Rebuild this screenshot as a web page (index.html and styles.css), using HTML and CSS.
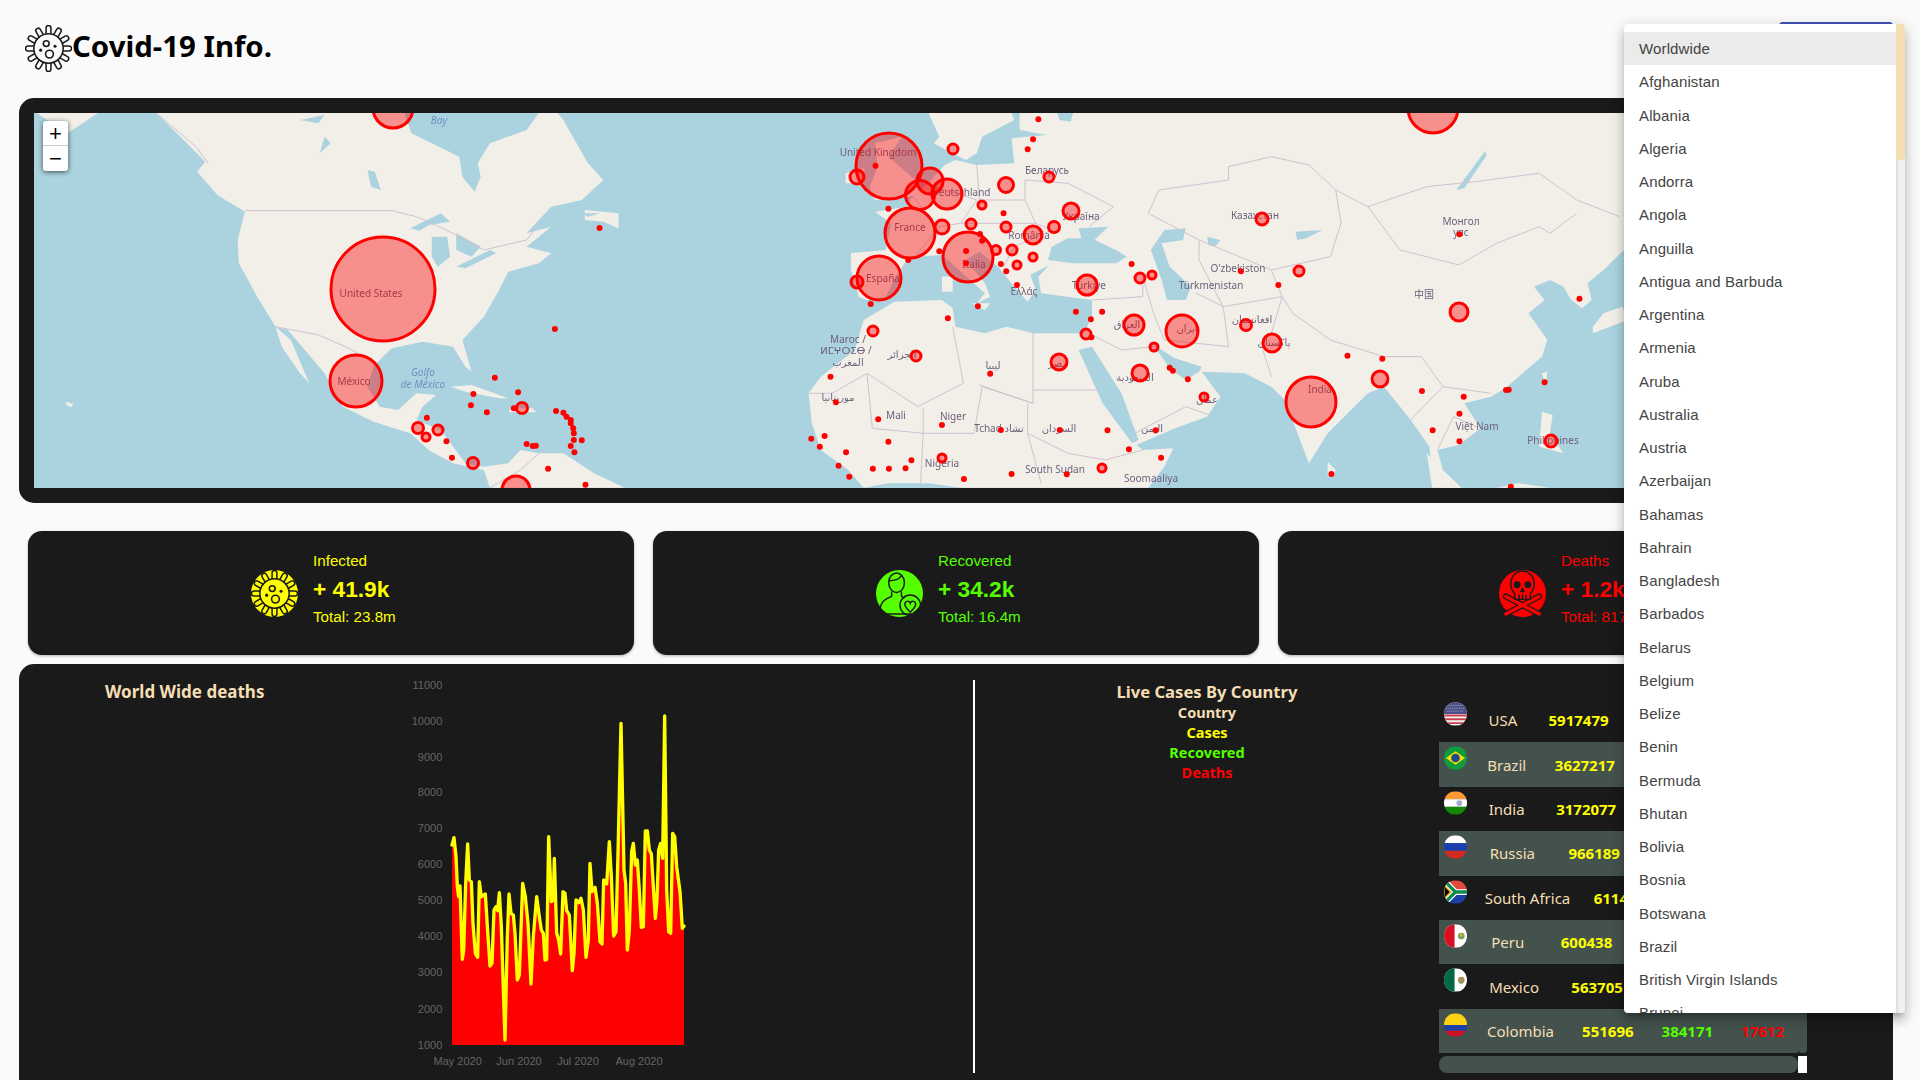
FILE: index.html
```html
<!DOCTYPE html>
<html lang="en">
<head>
    <meta charset="UTF-8">
    <meta name="viewport" content="width=device-width, initial-scale=1.0">
    <title>Covid-19 Info.</title>
    <link rel="stylesheet" href="styles.css">
</head>
<body>

    <svg class="defs" width="0" height="0">
        <defs>
            <g id="spikes">
                <path d="M14 0H21"/>
                <path transform="rotate(30)" d="M14 0H21"/>
                <path transform="rotate(60)" d="M14 0H21"/>
                <path transform="rotate(90)" d="M14 0H21"/>
                <path transform="rotate(120)" d="M14 0H21"/>
                <path transform="rotate(150)" d="M14 0H21"/>
                <path transform="rotate(180)" d="M14 0H21"/>
                <path transform="rotate(210)" d="M14 0H21"/>
                <path transform="rotate(240)" d="M14 0H21"/>
                <path transform="rotate(270)" d="M14 0H21"/>
                <path transform="rotate(300)" d="M14 0H21"/>
                <path transform="rotate(330)" d="M14 0H21"/>
            </g>
            <g id="virus" transform="translate(24 24)">
                <use href="#spikes" class="virus-outer"/>
                <use href="#spikes" class="virus-inner"/>
                <circle class="virus-body" r="15"/>
                <circle class="virus-ring" cx="-2.3" cy="-5" r="3"/>
                <circle class="virus-ring" cx="1" cy="5.7" r="4"/>
                <circle class="virus-dot" cx="6.7" cy="-2.3" r="1.6"/>
                <circle class="virus-dot" cx="-8" cy="1.7" r="1.6"/>
            </g>
        </defs>
    </svg>

    <header class="topbar">
        <div class="brand">
            <svg class="logo" viewBox="0 0 48 48"><use href="#virus"/></svg>
            <h1 class="brand-name">Covid-19 Info.</h1>
        </div>
        <button class="country-button">Worldwide</button>
    </header>

    <section class="map-panel">
        <div class="map">
            <svg class="map-svg" viewBox="34 113 1844 375" width="1844" height="375">
                <g class="tiles">
                    <!-- americas, traced in the left half -->
                    <g transform="translate(0 100) scale(.6124 .3333)">
                        <path class="land" d="M255 39L300 120L335 185L322 215L355 285L400 335L388 420L390 490L420 590L450 680L470 690L530 820L560 920L610 965L670 1000L700 1050L740 1090L790 1110L800 1163L1020 1163L970 1120L920 1060L880 1060L850 1050L830 1090L790 1100L760 1090L740 1040L720 990L680 960L690 920L712 885L680 880L650 930L620 920L600 860L610 800L625 770L640 745L690 725L740 740L760 800L770 815L755 720L790 650L815 570L830 515L880 490L900 460L860 440L900 380L860 400L900 320L950 300L985 240L960 190L920 60L910 39L880 39L860 90L800 130L780 190L785 230L775 275L755 230L750 170L672 100L660 39Z"/>
                        <path class="land" d="M450 680L475 720L505 850L490 820L460 740Z"/>
                        <path class="land" d="M955 330L1010 340L1010 385L985 365L955 360Z"/>
                        <path class="land" d="M60 39L160 39L135 70L110 100L85 70Z"/>
                        <path class="land" d="M735 860L770 855L830 895L815 895L760 875Z"/>
                        <path class="land" d="M835 925L870 925L875 937L830 937Z"/>
                        <path class="land" d="M108 905L120 912L116 922L108 915Z"/>
                        <path class="land" d="M1520 39H1568V70L1540 90Z"/>
                        <path class="water" d="M670 385L720 340L735 365L700 375L685 392Z"/>
                        <path class="water" d="M705 410L730 410L735 470L715 500L705 470Z"/>
                        <path class="water" d="M745 400L785 440L770 470L745 450Z"/>
                        <path class="water" d="M745 500L800 450L810 460L760 505Z"/>
                        <path class="water" d="M600 210L612 215L622 270L606 260Z"/>
                        <path class="water" d="M490 60L530 45L520 70Z"/>
                        <path class="water" d="M530 110L540 130L522 160Z"/>
                        <path class="water" d="M950 340H980L960 350Z"/>
                        <path class="border" d="M400 332H640L680 350L740 400L790 450L860 420L880 370"/>
                        <path class="border" d="M450 680L520 705L570 745L620 800"/>
                        <path class="border" d="M255 39L320 140L340 190"/>
                        <path class="border" d="M800 1163L850 1110L880 1060"/>
                    </g>
                    <!-- europe, africa and asia, traced in the right half -->
                    <g transform="translate(800 100) scale(.5357 .3333)">
                        <path class="land" d="M125 600L160 590L175 540L195 490L215 470L265 465L290 500L345 580L330 610L355 590L345 550L310 480L335 455L370 500L400 560L425 605L440 570L430 525L465 495L445 530L450 580L545 600L545 650L530 700L510 700L435 700L385 680L345 700L290 680L285 625L265 600L176 605L119 660L102 750L39 830L16 880L22 970L39 1050L90 1110L119 1163L165 1150L240 1150L300 1163L650 1163L680 1100L697 1045L640 1050L628 1035L700 985L760 950L785 890L750 815L830 820L880 860L905 900L950 1090L985 1000L1060 880L1090 860L1115 910L1140 960L1175 1040L1180 1120L1200 1163L1235 1163L1200 1110L1190 1050L1230 1035L1270 985L1240 910L1290 890L1320 860L1385 770L1395 720L1360 640L1390 600L1370 560L1400 540L1425 560L1440 600L1460 625L1478 600L1470 550L1500 510L1538 450L1600 400L1600 39L470 39L410 39L410 90L460 105L395 115L400 190L330 195L290 180L270 195L245 240L205 300L200 320L140 335L170 370L160 450L95 460L95 510L110 590Z"/>
                        <path class="land" d="M240 39L260 110L250 130L290 165L310 180L330 160L340 110L400 60L395 39Z"/>
                        <path class="land" d="M140 130L190 110L165 170L215 240L230 285L140 300L130 260L145 200Z"/>
                        <path class="land" d="M85 220L120 205L120 250L85 250Z"/>
                        <path class="land" d="M320 610L355 610L345 630Z"/>
                        <path class="land" d="M265 530L285 530L285 575L265 575Z"/>
                        <path class="land" d="M1480 680L1500 640L1535 620L1545 660L1480 700Z"/>
                        <path class="land" d="M1385 820L1395 815L1392 860Z"/>
                        <path class="land" d="M1385 935L1405 945L1400 1000L1425 1060L1380 1040Z"/>
                        <path class="land" d="M985 1085L1000 1110L995 1130L985 1125Z"/>
                        <path class="land" d="M1170 1060L1230 1163H1180Z"/>
                        <path class="land" d="M1300 1163L1340 1150L1400 1163Z"/>
                        <path class="water" d="M463 480L470 440L500 415L525 415L520 385L575 380L550 420L590 450L610 470L590 490L510 490Z"/>
                        <path class="water" d="M680 390L720 385L715 420L675 430L690 500L730 560L720 600L685 600L675 540L655 450Z"/>
                        <path class="water" d="M520 750L545 740L600 880L632 1020L620 1030L565 910Z"/>
                        <path class="water" d="M660 735L700 775L750 800L745 815L720 840L690 805Z"/>
                        <path class="water" d="M480 39L510 39L505 65L485 60Z"/>
                        <path class="water" d="M925 395L975 390L945 415L928 420Z"/>
                        <path class="water" d="M1225 270L1278 155L1282 165L1240 265Z"/>
                        <path class="water" d="M760 410L785 420L775 440L762 435Z"/>
                        <path class="border" d="M125 820L135 985L230 1000L325 1000L340 860L435 910V690"/>
                        <path class="border" d="M125 820L220 920L305 850L285 680"/>
                        <path class="border" d="M335 855L435 910"/>
                        <path class="border" d="M435 870H555"/>
                        <path class="border" d="M230 925V1000L225 1150"/>
                        <path class="border" d="M425 1000L500 1060L570 1080L640 1050"/>
                        <path class="border" d="M425 910V1000L450 1150"/>
                        <path class="border" d="M16 880H60L125 820"/>
                        <path class="border" d="M650 340L670 270L800 240L800 200L880 170L950 195L1000 270L1060 320"/>
                        <path class="border" d="M1060 320L1170 260L1260 245L1380 220L1450 300L1530 350"/>
                        <path class="border" d="M1060 320L1120 450L1230 495L1300 430L1380 380L1400 400L1450 340"/>
                        <path class="border" d="M900 590L920 640L990 720L1090 770L1160 770L1200 860L1290 880"/>
                        <path class="border" d="M640 530L660 640L680 720L800 740L790 620L740 580"/>
                        <path class="border" d="M790 620L900 590L880 700L860 730L880 830"/>
                        <path class="border" d="M745 420L880 510L990 470L1010 370L1000 270"/>
                        <path class="border" d="M650 340L745 420V480L790 620"/>
                        <path class="border" d="M900 590L880 510"/>
                        <path class="border" d="M330 195L335 300L420 300L420 240L500 250L585 320L540 380"/>
                        <path class="border" d="M250 260L330 300L300 370L260 380"/>
                        <path class="border" d="M210 290L260 380L215 470"/>
                        <path class="border" d="M420 300L440 370L470 390L400 440L380 500"/>
                        <path class="border" d="M300 370L400 370L440 370"/>
                        <path class="border" d="M540 700L600 750L660 740"/>
                        <path class="border" d="M625 1000L720 920L765 945"/>
                        <path class="border" d="M545 600L640 590L640 530"/>
                        <path class="border" d="M1140 960L1200 860"/>
                        <path class="border" d="M1190 1050L1220 950L1270 985"/>
                    </g>
                    <text class="map-label" x="371" y="297" text-anchor="middle">United States</text>
                    <text class="map-label" x="354" y="385" text-anchor="middle">México</text>
                    <text class="map-label water-label" x="423" y="376" text-anchor="middle">Golfo</text>
                    <text class="map-label water-label" x="423" y="388" text-anchor="middle">de México</text>
                    <text class="map-label water-label" x="439" y="124" text-anchor="middle">Bay</text>
                    <text class="map-label" x="878" y="156" text-anchor="middle">United Kingdom</text>
                    <text class="map-label" x="961" y="196" text-anchor="middle">Deutschland</text>
                    <text class="map-label" x="1047" y="174" text-anchor="middle">Беларусь</text>
                    <text class="map-label" x="1081" y="220" text-anchor="middle">Україна</text>
                    <text class="map-label" x="1029" y="239" text-anchor="middle">România</text>
                    <text class="map-label" x="910" y="231" text-anchor="middle">France</text>
                    <text class="map-label" x="974" y="268" text-anchor="middle">Italia</text>
                    <text class="map-label" x="883" y="282" text-anchor="middle">España</text>
                    <text class="map-label" x="1024" y="295" text-anchor="middle">Ελλάς</text>
                    <text class="map-label" x="1089" y="289" text-anchor="middle">Türkiye</text>
                    <text class="map-label" x="1255" y="219" text-anchor="middle">Казахстан</text>
                    <text class="map-label" x="1461" y="225" text-anchor="middle">Монгол</text>
                    <text class="map-label" x="1461" y="236" text-anchor="middle">улс</text>
                    <text class="map-label" x="1238" y="272" text-anchor="middle">O'zbekiston</text>
                    <text class="map-label" x="1211" y="289" text-anchor="middle">Türkmenistan</text>
                    <text class="map-label" x="1424" y="298" text-anchor="middle">中国</text>
                    <text class="map-label" x="1252" y="323" text-anchor="middle">افغانستان</text>
                    <text class="map-label" x="1274" y="346" text-anchor="middle">پاکستان</text>
                    <text class="map-label" x="1127" y="328" text-anchor="middle">العراق</text>
                    <text class="map-label" x="1187" y="332" text-anchor="middle">ایران</text>
                    <text class="map-label" x="993" y="369" text-anchor="middle">ليبيا</text>
                    <text class="map-label" x="1058" y="367" text-anchor="middle">مصر</text>
                    <text class="map-label" x="902" y="358" text-anchor="middle">الجزائر</text>
                    <text class="map-label" x="848" y="343" text-anchor="middle">Maroc /</text>
                    <text class="map-label" x="846" y="354" text-anchor="middle">ⵍⵎⵖⵔⵉⴱ /</text>
                    <text class="map-label" x="848" y="366" text-anchor="middle">المغرب</text>
                    <text class="map-label" x="838" y="401" text-anchor="middle">موريتانيا</text>
                    <text class="map-label" x="896" y="419" text-anchor="middle">Mali</text>
                    <text class="map-label" x="953" y="420" text-anchor="middle">Niger</text>
                    <text class="map-label" x="999" y="432" text-anchor="middle">Tchad تشاد</text>
                    <text class="map-label" x="1059" y="432" text-anchor="middle">السودان</text>
                    <text class="map-label" x="1152" y="432" text-anchor="middle">اليمن</text>
                    <text class="map-label" x="942" y="467" text-anchor="middle">Nigeria</text>
                    <text class="map-label" x="1055" y="473" text-anchor="middle">South Sudan</text>
                    <text class="map-label" x="1151" y="482" text-anchor="middle">Soomaaliya</text>
                    <text class="map-label" x="1320" y="393" text-anchor="middle">India</text>
                    <text class="map-label" x="1135" y="381" text-anchor="middle">السعودية</text>
                    <text class="map-label" x="1207" y="403" text-anchor="middle">عمان</text>
                    <text class="map-label" x="1477" y="430" text-anchor="middle">Việt Nam</text>
                    <text class="map-label" x="1553" y="444" text-anchor="middle">Philippines</text>
                </g>
                <g class="markers">
                    <circle cx="383" cy="289" r="52"/>
                    <circle cx="356" cy="381" r="26"/>
                    <circle cx="393" cy="108" r="20"/>
                    <circle cx="516" cy="490" r="14"/>
                    <circle cx="522" cy="408" r="5.5"/>
                    <circle cx="418" cy="428" r="5.5"/>
                    <circle cx="438" cy="430" r="5"/>
                    <circle cx="426" cy="437" r="4"/>
                    <circle cx="473" cy="463" r="5.5"/>
                    <circle cx="889" cy="166" r="33"/>
                    <circle cx="857" cy="177" r="7"/>
                    <circle cx="930" cy="181" r="13"/>
                    <circle cx="920" cy="195" r="14.5"/>
                    <circle cx="947" cy="194" r="15"/>
                    <circle cx="953" cy="149" r="5"/>
                    <circle cx="910" cy="233" r="25"/>
                    <circle cx="879" cy="278" r="22"/>
                    <circle cx="857" cy="282" r="6"/>
                    <circle cx="968" cy="257" r="25"/>
                    <circle cx="942" cy="227" r="7"/>
                    <circle cx="1006" cy="185" r="7.5"/>
                    <circle cx="1049" cy="177" r="5"/>
                    <circle cx="1071" cy="211" r="8"/>
                    <circle cx="982" cy="205" r="4"/>
                    <circle cx="971" cy="224" r="5"/>
                    <circle cx="1006" cy="227" r="5"/>
                    <circle cx="1033" cy="235" r="9"/>
                    <circle cx="1054" cy="227" r="5.5"/>
                    <circle cx="1012" cy="250" r="5"/>
                    <circle cx="996" cy="250" r="4.5"/>
                    <circle cx="1033" cy="257" r="4"/>
                    <circle cx="1017" cy="265" r="4"/>
                    <circle cx="1087" cy="285" r="10"/>
                    <circle cx="1182" cy="331" r="16"/>
                    <circle cx="1134" cy="325" r="10"/>
                    <circle cx="1086" cy="334" r="5"/>
                    <circle cx="1059" cy="362" r="8"/>
                    <circle cx="1140" cy="373" r="8"/>
                    <circle cx="1154" cy="347" r="4"/>
                    <circle cx="1272" cy="343" r="9"/>
                    <circle cx="1246" cy="325" r="5.5"/>
                    <circle cx="1311" cy="402" r="25"/>
                    <circle cx="1380" cy="379" r="8"/>
                    <circle cx="1459" cy="312" r="9"/>
                    <circle cx="1262" cy="219" r="6"/>
                    <circle cx="1299" cy="271" r="5"/>
                    <circle cx="1140" cy="278" r="5"/>
                    <circle cx="1152" cy="275" r="4"/>
                    <circle cx="1433" cy="108" r="25"/>
                    <circle cx="873" cy="331" r="5"/>
                    <circle cx="916" cy="356" r="5"/>
                    <circle cx="1551" cy="441" r="6"/>
                    <circle cx="1204" cy="397" r="4"/>
                    <circle cx="942" cy="458" r="4"/>
                    <circle cx="1102" cy="468" r="4"/>
                </g>
                <g transform="translate(0 100) scale(.6124 .3333)">
                    <path class="dots" d="M979 384h0M906 687h0M808 833h0M846 877h0M773 882h0M769 916h0M795 937h0M839 925h0M908 933h0M920 938h0M925 950h0M932 960h0M932 970h0M936 985h0M937 1000h0M937 1020h0M950 1021h0M932 1038h0M938 1057h0M860 1032h0M870 1038h0M875 1037h0M697 953h0M729 1024h0M738 1073h0M895 1106h0M956 1154h0"/>
                </g>
                <g transform="translate(800 100) scale(.5357 .3333)">
                    <path class="dots" d="M445 58h0M435 118h0M425 148h0M141 197h0M165 326h0M380 340h0M260 454h0M310 453h0M310 490h0M202 480h0M336 402h0M340 422h0M375 492h0M385 514h0M405 555h0M332 619h0M276 655h0M132 612h0M619 492h0M515 635h0M564 635h0M543 658h0M544 712h0M355 821h0M57 830h0M67 907h0M146 958h0M265 975h0M375 990h0M485 990h0M574 991h0M614 1048h0M664 991h0M674 1073h0M395 1122h0M498 1123h0M306 1137h0M165 1025h0M86 1057h0M46 1008h0M21 1016h0M37 1040h0M72 1097h0M136 1106h0M166 1106h0M197 1105h0M208 1081h0M92 1130h0M690 803h0M696 812h0M724 838h0M823 514h0M893 555h0M1231 403h0M1022 767h0M1087 776h0M1161 873h0M1239 890h0M1231 941h0M1181 991h0M1231 1024h0M1318 870h0M1323 869h0M1390 847h0M1455 596h0M992 1122h0M1327 1160h0"/>
                </g>
            </svg>
            <div class="zoom-control">
                <span class="zoom-button">+</span>
                <span class="zoom-button">−</span>
            </div>
        </div>
    </section>

    <section class="cards">
        <div class="card infected">
            <svg class="card-icon" viewBox="0 0 48 48">
                <circle cx="24" cy="24" r="24" class="card-disc"/>
                <use href="#virus"/>
            </svg>
            <div class="card-text">
                <div class="card-title">Infected</div>
                <div class="card-value">+ 41.9k</div>
                <div class="card-total">Total: 23.8m</div>
            </div>
        </div>
        <div class="card recovered">
            <svg class="card-icon" viewBox="0 0 48 48">
                <circle cx="24" cy="24" r="24" class="card-disc"/>
                <g class="icon-lines">
                    <ellipse cx="21" cy="13" rx="8" ry="10"/>
                    <path d="M13 11c3 0 10-1 13-5"/>
                    <path d="M16 22v5c-5 2-11 4-12 14"/>
                    <path d="M26 22v5l3 2"/>
                    <path d="M4 45H40"/>
                    <circle cx="35" cy="36" r="10.5"/>
                    <path d="M35 43c-3-3-5.500-5-5.500-8c0-3.500 4.500-4 5.500-1c1-3 5.500-2.500 5.500 1c0 3-2.500 5-5.500 8z"/>
                </g>
            </svg>
            <div class="card-text">
                <div class="card-title">Recovered</div>
                <div class="card-value">+ 34.2k</div>
                <div class="card-total">Total: 16.4m</div>
            </div>
        </div>
        <div class="card deaths">
            <svg class="card-icon" viewBox="0 0 48 48">
                <circle cx="24" cy="24" r="24" class="card-disc"/>
                <g class="icon-lines">
                    <path d="M7 27L41 45M41 27L7 45" class="bones"/>
                    <path d="M7 27L41 45M41 27L7 45" class="bones-fill"/>
                    <path d="M12 14a12 13 0 0 1 24 0c0 5-2 8-4 10v6H16v-6c-2-2-4-5-4-10z" class="skull"/>
                    <circle cx="18.500" cy="15" r="3.500" class="skull-eye"/>
                    <circle cx="29.500" cy="15" r="3.500" class="skull-eye"/>
                    <path d="M24 19l-1.500 3h3zM20.500 25v5M24 25v5M27.500 25v5"/>
                </g>
            </svg>
            <div class="card-text">
                <div class="card-title">Deaths</div>
                <div class="card-value">+ 1.2k</div>
                <div class="card-total">Total: 817.3k</div>
            </div>
        </div>
    </section>

    <section class="stats-panel">
        <div class="deaths-chart">
            <h2 class="chart-title">World Wide deaths</h2>
            <svg class="chart" viewBox="0 0 1020 1230" width="340" height="410">
                <g class="grid-lines">
                    <path d="M172 46V1125M358 46V1125M536 46V1125M718 46V1125"/>
                </g>
                <polygon class="area" points="156,525 162,503 168,560 172,650 176,680 180,648 184,780 187,868 191,840 197,640 203,522 208,630 214,635 219,760 226,850 233,862 238,635 244,680 256,672 264,800 270,888 276,880 282,720 288,710 293,722 298,668 304,770 315,1110 322,800 327,672 333,730 340,735 345,790 352,930 358,915 368,640 376,680 384,760 393,942 400,800 410,680 418,740 424,780 430,790 435,870 440,868 446,500 454,695 460,690 463,565 470,790 476,810 482,852 489,665 495,670 500,722 508,735 517,902 522,850 528,690 536,698 543,685 550,720 558,862 565,810 570,580 576,665 585,652 592,700 600,815 606,822 611,630 620,642 628,515 634,620 641,798 648,785 654,550 663,160 672,600 677,640 682,840 688,780 695,545 700,520 706,585 712,570 718,660 724,772 730,770 736,483 742,483 748,540 754,552 760,650 766,745 771,690 776,540 782,520 788,565 794,138 800,660 806,785 812,790 818,490 824,500 830,590 840,665 847,775 852,768 852,1125 156,1125"/>
                <polyline class="line" points="156,525 162,503 168,560 172,650 176,680 180,648 184,780 187,868 191,840 197,640 203,522 208,630 214,635 219,760 226,850 233,862 238,635 244,680 256,672 264,800 270,888 276,880 282,720 288,710 293,722 298,668 304,770 315,1110 322,800 327,672 333,730 340,735 345,790 352,930 358,915 368,640 376,680 384,760 393,942 400,800 410,680 418,740 424,780 430,790 435,870 440,868 446,500 454,695 460,690 463,565 470,790 476,810 482,852 489,665 495,670 500,722 508,735 517,902 522,850 528,690 536,698 543,685 550,720 558,862 565,810 570,580 576,665 585,652 592,700 600,815 606,822 611,630 620,642 628,515 634,620 641,798 648,785 654,550 663,160 672,600 677,640 682,840 688,780 695,545 700,520 706,585 712,570 718,660 724,772 730,770 736,483 742,483 748,540 754,552 760,650 766,745 771,690 776,540 782,520 788,565 794,138 800,660 806,785 812,790 818,490 824,500 830,590 840,665 847,775 852,768"/>
                <g class="axis-y">
                    <text x="127" y="57">11000</text>
                    <text x="127" y="165">10000</text>
                    <text x="127" y="273">9000</text>
                    <text x="127" y="379">8000</text>
                    <text x="127" y="487">7000</text>
                    <text x="127" y="595">6000</text>
                    <text x="127" y="703">5000</text>
                    <text x="127" y="811">4000</text>
                    <text x="127" y="919">3000</text>
                    <text x="127" y="1028">2000</text>
                    <text x="127" y="1136">1000</text>
                </g>
                <g class="axis-x">
                    <text x="173" y="1184">May 2020</text>
                    <text x="357" y="1184">Jun 2020</text>
                    <text x="534" y="1184">Jul 2020</text>
                    <text x="717" y="1184">Aug 2020</text>
                </g>
            </svg>
        </div>

        <div class="live-cases">
            <div class="cases-head">
                <h2 class="cases-title">Live Cases By Country</h2>
                <div class="head-list">
                    <div class="head-item">Country</div>
                    <div class="head-item col-cases">Cases</div>
                    <div class="head-item col-recovered">Recovered</div>
                    <div class="head-item col-deaths">Deaths</div>
                </div>
            </div>
            <div class="cases-table">
                <div class="rows">
                    <div class="row">
                        <svg class="flag" viewBox="0 0 24 24">
                            <rect width="24" height="24" fill="#f4f4f4"/>
                            <path d="M0 13.500H24M0 17.500H24M0 21.500H24" stroke="#c8414b" stroke-width="2"/>
                            <rect width="24" height="12" fill="#4b4f85"/>
                            <path d="M3 3h18M2 6h20M3 9h18" stroke="#a9a9c8" stroke-width="1" stroke-dasharray="1 1"/>
                        </svg>
                        <div class="cells"><span class="country">USA</span><span class="num col-cases">5917479</span><span class="num col-recovered">3237151</span><span class="num col-deaths">181773</span></div>
                    </div>
                    <div class="row">
                        <svg class="flag" viewBox="0 0 24 24">
                            <rect width="24" height="24" fill="#0f9d3b"/>
                            <path d="M2 12L12 5L22 12L12 19Z" fill="#fbdc00"/>
                            <circle cx="12" cy="12" r="4.500" fill="#1d4a8f"/>
                        </svg>
                        <div class="cells"><span class="country">Brazil</span><span class="num col-cases">3627217</span><span class="num col-recovered">2778709</span><span class="num col-deaths">115451</span></div>
                    </div>
                    <div class="row">
                        <svg class="flag" viewBox="0 0 24 24">
                            <rect width="24" height="8" fill="#ff9933"/>
                            <rect y="8" width="24" height="8" fill="#fff"/>
                            <rect y="16" width="24" height="8" fill="#138808"/>
                            <circle cx="16" cy="12" r="3" fill="#a9a9d8"/>
                        </svg>
                        <div class="cells"><span class="country">India</span><span class="num col-cases">3172077</span><span class="num col-recovered">2402642</span><span class="num col-deaths">58546</span></div>
                    </div>
                    <div class="row">
                        <svg class="flag" viewBox="0 0 24 24">
                            <rect width="24" height="8" fill="#fff"/>
                            <rect y="8" width="24" height="8" fill="#1c3fb0"/>
                            <rect y="16" width="24" height="8" fill="#d52b1e"/>
                        </svg>
                        <div class="cells"><span class="country">Russia</span><span class="num col-cases">966189</span><span class="num col-recovered">782060</span><span class="num col-deaths">16568</span></div>
                    </div>
                    <div class="row">
                        <svg class="flag" viewBox="0 0 24 24">
                            <rect width="24" height="12" fill="#de4b3c"/>
                            <rect y="12" width="24" height="12" fill="#1c3fa8"/>
                            <path d="M0 0L12 12L0 24M12 12H24" fill="none" stroke="#fff" stroke-width="6"/>
                            <path d="M0 0L12 12L0 24M12 12H24" fill="none" stroke="#0a8a50" stroke-width="3.500"/>
                            <path d="M0 5L7 12L0 19Z" fill="#000" stroke="#fbb814" stroke-width="1.500"/>
                        </svg>
                        <div class="cells"><span class="country">South Africa</span><span class="num col-cases">611450</span><span class="num col-recovered">516494</span><span class="num col-deaths">13159</span></div>
                    </div>
                    <div class="row">
                        <svg class="flag" viewBox="0 0 24 24">
                            <rect width="24" height="24" fill="#fff"/>
                            <rect width="11" height="24" fill="#d91023"/>
                            <circle cx="18" cy="12" r="3.500" fill="#7da35a"/>
                            <circle cx="18" cy="11" r="1.500" fill="#e0b040"/>
                        </svg>
                        <div class="cells"><span class="country">Peru</span><span class="num col-cases">600438</span><span class="num col-recovered">414039</span><span class="num col-deaths">27813</span></div>
                    </div>
                    <div class="row">
                        <svg class="flag" viewBox="0 0 24 24">
                            <rect width="24" height="24" fill="#fff"/>
                            <rect width="11" height="24" fill="#006847"/>
                            <circle cx="18" cy="12" r="3.500" fill="#b98a5e"/>
                            <circle cx="18" cy="14" r="2" fill="#7da35a"/>
                        </svg>
                        <div class="cells"><span class="country">Mexico</span><span class="num col-cases">563705</span><span class="num col-recovered">389171</span><span class="num col-deaths">60800</span></div>
                    </div>
                    <div class="row">
                        <svg class="flag" viewBox="0 0 24 24">
                            <rect width="24" height="12" fill="#fcd116"/>
                            <rect y="12" width="24" height="6" fill="#1c3fa8"/>
                            <rect y="18" width="24" height="6" fill="#ce1126"/>
                        </svg>
                        <div class="cells"><span class="country">Colombia</span><span class="num col-cases">551696</span><span class="num col-recovered">384171</span><span class="num col-deaths">17612</span></div>
                    </div>
                </div>
                <div class="bar-vertical"></div>
                <div class="bar-horizontal"></div>
                <div class="bar-corner"></div>
            </div>
        </div>
    </section>

    <div class="menu">
        <ul class="menu-list">
            <li class="menu-item selected">Worldwide</li>
            <li class="menu-item">Afghanistan</li>
            <li class="menu-item">Albania</li>
            <li class="menu-item">Algeria</li>
            <li class="menu-item">Andorra</li>
            <li class="menu-item">Angola</li>
            <li class="menu-item">Anguilla</li>
            <li class="menu-item">Antigua and Barbuda</li>
            <li class="menu-item">Argentina</li>
            <li class="menu-item">Armenia</li>
            <li class="menu-item">Aruba</li>
            <li class="menu-item">Australia</li>
            <li class="menu-item">Austria</li>
            <li class="menu-item">Azerbaijan</li>
            <li class="menu-item">Bahamas</li>
            <li class="menu-item">Bahrain</li>
            <li class="menu-item">Bangladesh</li>
            <li class="menu-item">Barbados</li>
            <li class="menu-item">Belarus</li>
            <li class="menu-item">Belgium</li>
            <li class="menu-item">Belize</li>
            <li class="menu-item">Benin</li>
            <li class="menu-item">Bermuda</li>
            <li class="menu-item">Bhutan</li>
            <li class="menu-item">Bolivia</li>
            <li class="menu-item">Bosnia</li>
            <li class="menu-item">Botswana</li>
            <li class="menu-item">Brazil</li>
            <li class="menu-item">British Virgin Islands</li>
            <li class="menu-item">Brunei</li>
        </ul>
        <div class="menu-track"><div class="menu-thumb"></div></div>
    </div>

</body>
</html>
```

FILE: styles.css
```css
html,
body {
    margin: 0;
    height: 100%;
    overflow: hidden;
}
body {
    position: relative;
    background-color: #fafafa;
    font-family: "Liberation Sans", Arial, sans-serif;
}
.defs {
    position: absolute;
}

/* virus drawing, shared by the logo and the infected card */
.logo,
.card-icon {
    --ink: #1a1a1a;
    --paper: #fafafa;
}
.infected .card-icon {
    --paper: #ffff00;
}
.virus-outer {
    fill: none;
    stroke: var(--ink);
    stroke-width: 6.5;
    stroke-linecap: round;
}
.virus-inner {
    fill: none;
    stroke: var(--paper);
    stroke-width: 3.4;
    stroke-linecap: round;
}
.virus-body {
    fill: var(--paper);
    stroke: var(--ink);
    stroke-width: 1.6;
}
.virus-ring {
    fill: none;
    stroke: var(--ink);
    stroke-width: 1.6;
}
.virus-dot {
    fill: var(--ink);
}

.topbar {
    height: 98px;
    display: flex;
    justify-content: space-between;
    padding: 22px 27px 0 25px;
    box-sizing: border-box;
}
.brand {
    display: flex;
    align-items: flex-start;
    margin-top: 3px;
}
.logo {
    width: 47px;
    height: 47px;
    flex: 0 0 auto;
}
.brand-name {
    margin: 0;
    font-family: "Noto Sans", sans-serif;
    font-size: 29.4px;
    font-weight: 700;
    line-height: 42px;
    color: #000;
}
.country-button {
    width: 114px;
    height: 36px;
    border: none;
    border-radius: 4px;
    background: #3f51b5;
    color: #fff;
}

.map-panel {
    margin: 0 27px 28px 19px;
    padding: 15px;
    background: #1a1a1a;
    border-radius: 15px;
}
.map {
    position: relative;
    height: 375px;
    overflow: hidden;
    background: #aad3df;
}
.map-svg {
    display: block;
}
.tiles {
    filter: blur(0.4px);
}
.land {
    fill: #f2efe9;
}
.water {
    fill: #aad3df;
}
.border {
    fill: none;
    stroke: #cfc2cf;
    stroke-width: 1;
    vector-effect: non-scaling-stroke;
}
.map-label {
    font-family: "Noto Sans", "DejaVu Sans", "Noto Sans CJK SC", sans-serif;
    font-size: 10px;
    fill: #6f5f7c;
}
.water-label {
    font-style: italic;
    fill: #6f8fc0;
}
.markers circle {
    fill: rgba(255, 0, 0, 0.4);
    stroke: #ff0000;
    stroke-width: 3;
}
.dots {
    fill: none;
    stroke: #ff0000;
    stroke-width: 6;
    stroke-linecap: round;
    vector-effect: non-scaling-stroke;
}
.zoom-control {
    position: absolute;
    top: 8px;
    left: 9px;
    width: 25px;
    background: #fff;
    border-radius: 3px;
    box-shadow: 0 1px 5px rgba(0, 0, 0, 0.65);
}
.zoom-button {
    display: block;
    height: 25px;
    font-size: 22px;
    line-height: 25px;
    text-align: center;
    color: #000;
}
.zoom-button:first-child {
    border-bottom: 1px solid #ccc;
    height: 24px;
}

.cards {
    display: grid;
    grid-template-columns: repeat(3, 606px);
    gap: 19px;
    margin: 0 0 9px 28px;
}
.card {
    height: 124px;
    display: flex;
    align-items: center;
    justify-content: center;
    gap: 15px;
    background: #1a1a1a;
    border-radius: 14px;
    box-shadow: 0 1px 3px rgba(0, 0, 0, 0.3);
}
.card-icon {
    width: 47px;
    height: 47px;
}
.card-text {
    width: 98px;
    white-space: nowrap;
    padding-bottom: 9px;
}
.deaths .card-text {
    width: 102px;
}
.card-title,
.card-total {
    font-size: 15.2px;
    line-height: 28px;
}
.card-value {
    font-size: 22.7px;
    font-weight: 700;
    line-height: 28px;
}
.infected .card-text {
    color: #ffff00;
}
.infected .card-disc {
    fill: #ffff00;
}
.recovered .card-text {
    color: #55ff00;
}
.recovered .card-disc {
    fill: #55ff00;
}
.deaths .card-text {
    color: #ff0000;
}
.deaths .card-disc {
    fill: #ff0000;
}
.icon-lines {
    fill: none;
    stroke: #1a1a1a;
    stroke-width: 1.5;
}
.skull {
    fill: #ff0000;
}
.skull-eye {
    fill: #1a1a1a;
    stroke: none;
}
.bones {
    stroke-width: 6;
    stroke-linecap: round;
}
.bones-fill {
    stroke: #ff0000;
    stroke-width: 3.5;
    stroke-linecap: round;
}

.stats-panel {
    height: 416px;
    margin: 0 27px 0 19px;
    padding-top: 6px;
    box-sizing: border-box;
    display: flex;
    background: #1a1a1a;
    border-radius: 15px 15px 0 0;
    overflow: hidden;
}
.deaths-chart {
    width: 954px;
    flex: 0 0 auto;
    display: flex;
    align-items: flex-start;
}
.chart-title,
.cases-title {
    margin: 0;
    font-family: "Noto Sans", sans-serif;
    font-size: 16.6px;
    font-weight: 700;
    line-height: 24px;
    color: #f5deb3;
}
.chart-title {
    width: 295px;
    margin: 10px 0 0 86px;
    font-size: 17px;
}
.chart {
    display: block;
    flex: 0 0 auto;
}
.grid-lines path {
    fill: none;
    stroke: #161616;
    stroke-width: 2;
}
.area {
    fill: #ff0000;
}
.line {
    fill: none;
    stroke: #ffff00;
    stroke-width: 10;
    stroke-linejoin: round;
    stroke-linecap: round;
}
.axis-y text,
.axis-x text {
    font-family: "Liberation Sans", Arial, sans-serif;
    font-size: 33px;
    fill: #666;
}
.axis-y text {
    text-anchor: end;
}
.axis-x text {
    text-anchor: middle;
}

.live-cases {
    display: flex;
    height: 393px;
    margin-top: 10px;
    border-left: 2px solid #fff;
}
.cases-head {
    width: 464px;
    flex: 0 0 auto;
    text-align: center;
}
.head-list {
    margin-top: -2px;
}
.head-item {
    font-family: "Noto Sans", sans-serif;
    font-size: 14.5px;
    font-weight: 700;
    line-height: 20px;
    color: #f5deb3;
}
.head-item.col-cases {
    color: #ffff00;
}
.head-item.col-recovered {
    color: #55ff00;
}
.head-item.col-deaths {
    color: #ff0000;
}
.cases-table {
    width: 368px;
    margin-top: 18px;
    display: grid;
    grid-template-columns: 359px 9px;
    grid-template-rows: 355px 17px;
    row-gap: 3px;
}
.row {
    height: 44.4px;
    display: flex;
    align-items: flex-start;
    font-family: "Noto Sans", sans-serif;
    font-size: 15px;
}
.row:nth-child(even) {
    background: #44524e;
}
.flag {
    width: 23px;
    height: 24px;
    flex: 0 0 auto;
    margin: 4px 6px 0 5px;
    border-radius: 50%;
}
.cells {
    flex: 1;
    height: 100%;
    display: flex;
    align-items: center;
    justify-content: space-around;
    box-sizing: border-box;
}
.country {
    color: #f5deb3;
}
.num {
    font-weight: 700;
}
.num.col-cases {
    color: #ffff00;
}
.num.col-recovered {
    color: #55ff00;
}
.num.col-deaths {
    color: #ff0000;
}
.bar-vertical {
    background: #44524e;
    border-radius: 0 0 4px 4px;
}
.bar-horizontal {
    background: #44524e;
    border-radius: 8px;
}
.bar-corner {
    background: #fff;
}

.menu {
    position: absolute;
    top: 24px;
    left: 1624px;
    width: 281px;
    height: 989px;
    display: flex;
    background: #fff;
    border-radius: 4px;
    overflow: hidden;
    box-shadow: 0 5px 5px -3px rgba(0, 0, 0, 0.2), 0 8px 10px 1px rgba(0, 0, 0, 0.14), 0 3px 14px 2px rgba(0, 0, 0, 0.12);
}
.menu-list {
    flex: 1;
    margin: 0;
    padding: 8px 0 0;
    list-style: none;
    overflow: hidden;
}
.menu-item {
    height: 33.26px;
    padding-left: 15px;
    font-size: 15px;
    letter-spacing: 0.14px;
    line-height: 33.26px;
    color: #444;
}
.menu-item.selected {
    background: #ebebeb;
}
.menu-track {
    width: 9px;
    flex: 0 0 auto;
    background: #f1f1f1;
    box-shadow: inset 2px 0 2px rgba(0, 0, 0, 0.08);
}
.menu-thumb {
    height: 136px;
    background: #f5deb3;
    border-radius: 4px;
}
```
